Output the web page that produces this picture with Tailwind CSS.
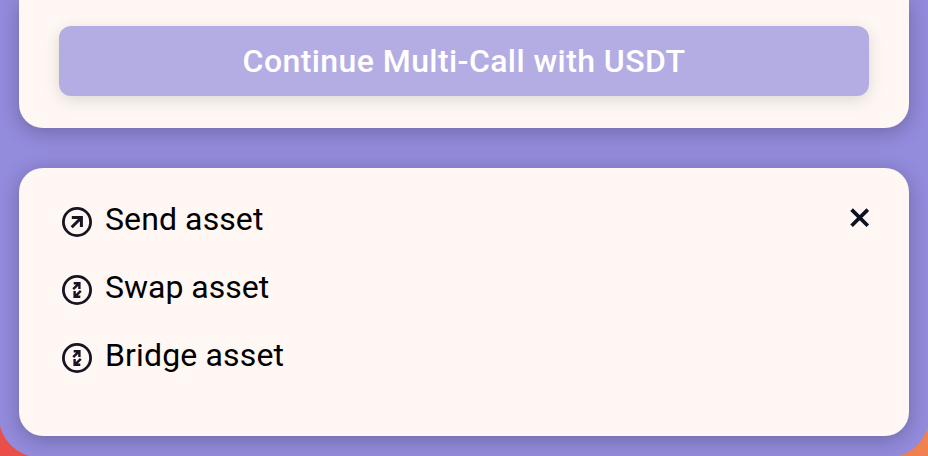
<!DOCTYPE html>
<html lang="en">
<head>
<meta charset="utf-8">
<title>Wallet</title>
<script src="https://cdn.jsdelivr.net/npm/@tailwindcss/browser@4"></script>
</head>
<body class="h-[456px] w-[928px] overflow-hidden bg-linear-to-r from-[#e94f48] to-[#f0824e] font-['Roboto',sans-serif]">
<div class="-mx-px flex h-[457px] flex-col gap-10 rounded-b-[40px] bg-[#938bdc] px-5">
  <section class="h-32 shrink-0 rounded-b-3xl bg-[#fff7f3] px-10 pt-[26px] shadow-[0_4px_20px_rgba(0,0,0,0.25)]">
    <button class="flex h-[70px] w-full items-center justify-center rounded-xl bg-[#b4ade3] text-[32px] font-medium whitespace-nowrap text-white shadow-[0_4px_16px_rgba(20,50,20,0.15)]"><span class="tracking-[0.42px]">Continue Multi-Call with USDT</span></button>
  </section>
  <section class="flex h-[268px] shrink-0 justify-between rounded-3xl bg-[#fff7f3] pt-[35px] pr-[39px] pl-[43px] shadow-[0_4px_20px_rgba(0,0,0,0.25)]">
    <ul class="flex flex-col gap-7 text-[32px] leading-10 whitespace-nowrap text-black">
      <li class="flex h-10 gap-[13px]">
        <svg class="mt-1 size-[30px]" viewBox="0 0 30 30" fill="none" stroke="#181424" stroke-width="3"><circle cx="15" cy="15" r="13.6" stroke-width="2.8"/><path d="M9.7 20.3 19.3 10.7M9.8 10.5h9.6v9.6"/></svg>
        <span class="-mt-1 tracking-[0.1px]">Send asset</span>
      </li>
      <li class="flex h-10 gap-[13px]">
        <svg class="mt-1 size-[30px]" viewBox="0 0 30 30" fill="none" stroke="#181424" stroke-width="2.4"><circle cx="15" cy="15" r="13.6" stroke-width="2.8"/><path d="m11.2 14.2 5.8-5.8M11.7 8.3h5.7V14M18.8 15.8 13 21.6M18.3 21.7h-5.7V16"/></svg>
        <span class="-mt-1 tracking-[0px]">Swap asset</span>
      </li>
      <li class="flex h-10 gap-[13px]">
        <svg class="mt-1 size-[30px]" viewBox="0 0 30 30" fill="none" stroke="#181424" stroke-width="2.4"><circle cx="15" cy="15" r="13.6" stroke-width="2.8"/><path d="m11.2 14.2 5.8-5.8M11.7 8.3h5.7V14M18.8 15.8 13 21.6M18.3 21.7h-5.7V16"/></svg>
        <span class="-mt-1 tracking-[0.15px]">Bridge asset</span>
      </li>
    </ul>
    <button aria-label="Close" class="mt-[5px] size-5"><svg class="size-5" viewBox="0 0 20 20" fill="none" stroke="#0c1224" stroke-width="3.7"><path d="m1.6 1.6 16.2 16.2M17.8 1.6 1.6 17.8"/></svg></button>
  </section>
</div>
</body>
</html>
